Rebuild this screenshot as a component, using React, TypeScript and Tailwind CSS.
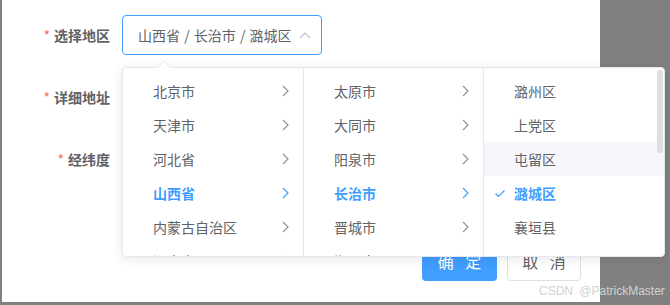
const font = "font-['Microsoft_YaHei','Noto_Sans_CJK_SC',sans-serif]";

const ChevronRight = ({ className }: { className?: string }) => (
  <svg width="7" height="12" viewBox="0 0 7 12" className={className}>
    <polyline points="1,1 6,6 1,11" fill="none" stroke="currentColor" strokeWidth="1.2" />
  </svg>
);

const Check = () => (
  <svg width="10" height="8" viewBox="0 0 10 8" className="text-[#409eff]">
    <polyline points="0.5,3.5 3.5,6.5 9.5,0.5" fill="none" stroke="currentColor" strokeWidth="1.2" />
  </svg>
);

interface Node {
  label: string;
  active?: boolean;
  hover?: boolean;
}

const menus: { nodes: Node[]; leaf?: boolean; width: string }[] = [
  {
    width: "w-[181px] border-r border-[#e4e7ed]",
    nodes: [
      { label: "北京市" },
      { label: "天津市" },
      { label: "河北省" },
      { label: "山西省", active: true },
      { label: "内蒙古自治区" },
      { label: "辽宁省" },
    ],
  },
  {
    width: "w-[180px] border-r border-[#e4e7ed]",
    nodes: [
      { label: "太原市" },
      { label: "大同市" },
      { label: "阳泉市" },
      { label: "长治市", active: true },
      { label: "晋城市" },
      { label: "朔州市" },
    ],
  },
  {
    width: "flex-1",
    leaf: true,
    nodes: [
      { label: "潞州区" },
      { label: "上党区" },
      { label: "屯留区", hover: true },
      { label: "潞城区", active: true },
      { label: "襄垣县" },
      { label: "平顺县" },
    ],
  },
];

const FormRow = ({ label, children }: { label: string; children?: React.ReactNode }) => (
  <div className="flex h-10 items-center">
    <div className="w-[120px] pr-3 text-right text-[14px] font-bold text-[#606266]">
      <span className="mr-[4px] font-normal text-[#f56c6c]">*</span>
      {label}
    </div>
    {children}
  </div>
);

export default function App() {
  return (
    <div className={`relative h-[305px] w-[670px] overflow-hidden bg-[#808080] ${font}`}>
      <div className="ml-[2px] h-[302px] w-[598px] bg-white pt-[15px]">
        <div className="flex flex-col gap-[22px]">
          <FormRow label="选择地区">
            <div className="flex h-10 w-[200px] items-center justify-between rounded-[4px] border border-[#409eff] pl-[15px] pr-[10px] text-[14px] text-[#606266]">
              <span className="whitespace-pre [word-spacing:1px]">山西省 / 长治市 / 潞城区</span>
              <svg width="12" height="7" viewBox="0 0 12 7" className="text-[#c0c4cc]">
                <polyline points="1,6 6,1 11,6" fill="none" stroke="currentColor" strokeWidth="1.2" />
              </svg>
            </div>
          </FormRow>
          <FormRow label="详细地址" />
          <FormRow label="经纬度" />
        </div>
        <div className="mt-[62px] flex justify-end gap-[10px] pr-[19px]">
          <button className="flex h-10 w-[75px] items-center justify-center whitespace-pre rounded-[4px] bg-[#409eff] text-[16px] text-white [word-spacing:8px]">
            确 定
          </button>
          <button className="flex h-10 w-[74px] items-center justify-center whitespace-pre rounded-[4px] border border-[#dcdfe6] bg-white text-[16px] text-[#606266] [word-spacing:8px]">
            取 消
          </button>
        </div>
      </div>

      {/* cascader dropdown */}
      <div className="absolute left-[122px] top-[67px] w-[543px] rounded-[4px] border border-[#e4e7ed] bg-white shadow-[0_2px_12px_0_rgba(0,0,0,0.1)]">
        <svg width="14" height="7" viewBox="0 0 14 7" className="absolute -top-[7px] left-[34px]">
          <polygon points="0,7 7,0 14,7" fill="white" />
          <polyline points="0,7 7,0 14,7" fill="none" stroke="#e4e7ed" strokeWidth="1" />
        </svg>
        <div className="flex h-[188px] overflow-hidden">
          {menus.map((m, i) => (
            <div key={i} className={`relative h-full overflow-hidden pt-[6px] ${m.width}`}>
              {m.nodes.map((n) => (
                <div
                  key={n.label}
                  className={`relative flex h-[34px] shrink-0 items-center justify-between pl-[30px] pr-[14px] text-[14px] ${
                    n.active ? "font-bold text-[#409eff]" : "text-[#606266]"
                  } ${n.hover ? "bg-[#f5f7fa]" : ""}`}
                >
                  {m.leaf && n.active && (
                    <span className="absolute left-[11px] top-[14px] flex">
                      <Check />
                    </span>
                  )}
                  <span>{n.label}</span>
                  {!m.leaf && <ChevronRight className={n.active ? "text-[#409eff]" : "text-[#909399]"} />}
                </div>
              ))}
              {m.leaf && <div className="absolute right-[1px] top-[2px] h-[83px] w-[6px] rounded-full bg-[#dddee0]" />}
            </div>
          ))}
        </div>
      </div>

      <div className="absolute left-[539px] top-[284px] whitespace-nowrap font-['Liberation_Sans',sans-serif] text-[12px] leading-[14px] text-[#d2d2d2] [word-spacing:3px]">
        CSDN @PatrickMaster
      </div>
    </div>
  );
}
